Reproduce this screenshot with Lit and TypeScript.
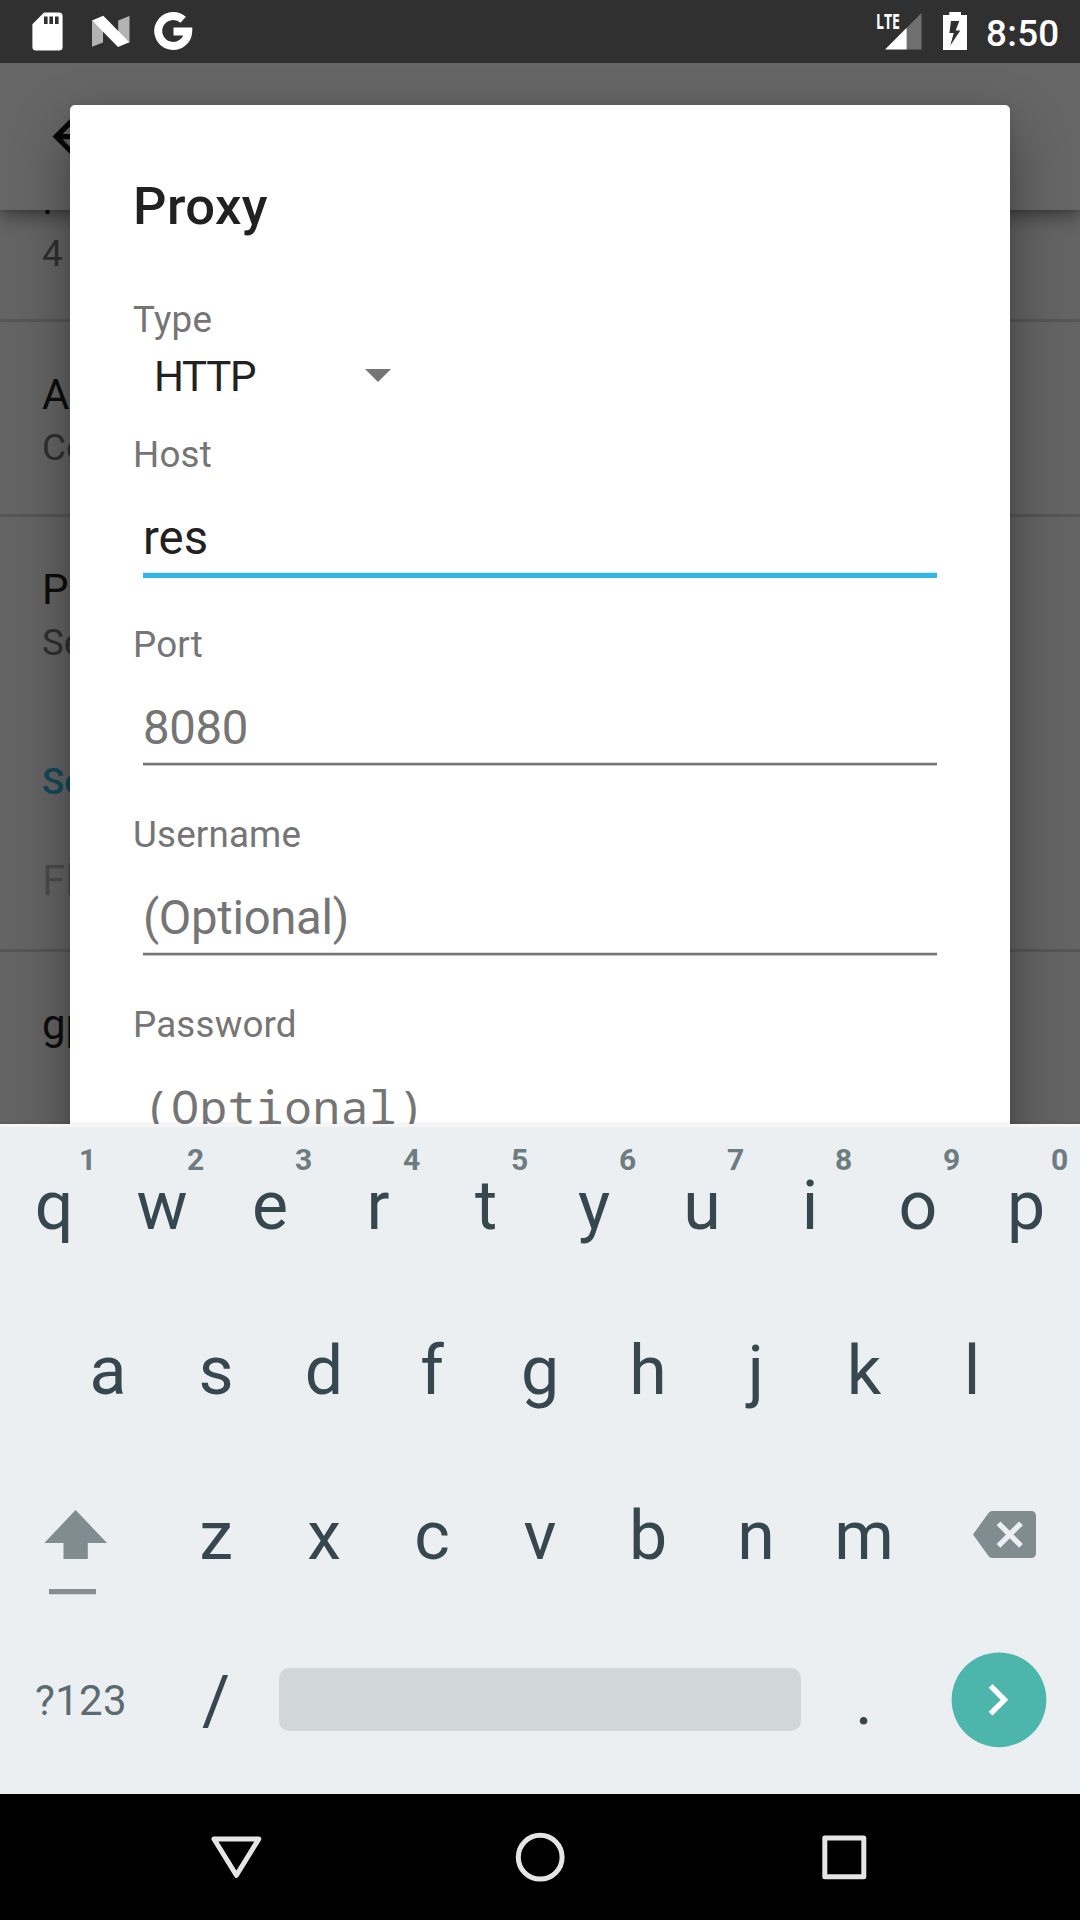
import { LitElement, html, css, svg, nothing } from "lit";
import { customElement, property } from "lit/decorators.js";

const FONT = css`Roboto, "Noto Sans", sans-serif`;

@customElement("status-bar")
class StatusBar extends LitElement {
  static styles = css`
    :host { display: flex; align-items: flex-start; justify-content: space-between; height: 63px; background: #303030; color: #fff; font-family: ${FONT}; }
    svg { display: block; height: 63px; }
    .right { display: flex; }
    .lte { font: 700 22px/24px "Open Sans", ${FONT}; }
    .time { box-sizing: border-box; width: 100px; padding-left: 6px; font-size: 36.75px; font-weight: 500; line-height: 68px; letter-spacing: .3px; }
  `;
  render() {
    return html`
      <svg width="200" viewBox="0 0 200 63">
        <path fill="#fff" fill-rule="evenodd" d="M44 12.5H59a3.6 3.6 0 0 1 3.6 3.6V47a3.6 3.6 0 0 1-3.6 3.6H36a3.6 3.6 0 0 1-3.6-3.6V24.2ZM44 16.500v7.500h3.600v-7.500Zm5.400 0v7.500h3.600v-7.500Zm5.600 0v7.500h3.600v-7.500Z"/>
        <path fill="#b3b3b3" d="M92 20.500 103 31v11.500L92 46.800ZM129.500 16 118.200 20.500V32L129.500 43Z"/>
        <path fill="#fff" d="M92 20.500 103.300 15.800 129.300 42.300 118 47Z"/>
        <path fill="none" stroke="#fff" stroke-width="8" d="M183.200 19.800A15 15 0 1 0 188.200 31.500H173.500"/>
      </svg>
      <div class="right">
        <svg width="106" viewBox="874 0 106 63">
          <text class="lte" x="876" y="29" fill="#fff" textLength="24" lengthAdjust="spacingAndGlyphs">LTE</text>
          <path fill="#6f6f6f" d="M921.500 13V49.500H906.500V28Z"/>
          <path fill="#fff" d="M906.700 27.800V49.500H885Z"/>
          <path fill="#fff" fill-rule="evenodd" d="M949.300 12H961v3h6v35H943V15h6.300ZM951 21l-1.600 12h4.300l-3.400 12.600L960.300 30.600h-4.600l3.600-9.600Z"/>
        </svg>
        <div class="time">8:50</div>
      </div>`;
  }
}

@customElement("settings-page")
class SettingsPage extends LitElement {
  static styles = css`
    :host { display: flex; flex-direction: column; height: 1731px; background: #fafafa; color: #212121; font-family: ${FONT}; }
    .bar { flex: none; height: 147px; box-sizing: border-box; padding: 42px; background: #fff; position: relative; z-index: 1; box-shadow: 0 6px 18px rgba(0,0,0,.42), 0 0 4px rgba(0,0,0,.2); }
    .bar svg { display: block; }
    .item { flex: none; box-sizing: border-box; padding-left: 42px; border-bottom: 3px solid #d8d8d8; }
    .main { font-size: 42px; line-height: 50px; }
    .sub { margin-top: 2px; font-size: 36.75px; line-height: 52px; color: #757575; }
    .first { height: 112px; padding-top: 17px; }
    .first .main { margin-top: -52px; }
    .first .sub { line-height: 54px; }
    .a { height: 195px; padding-top: 48px; }
    .p { height: 223px; padding-top: 48px; border: 0; }
    .head { font-size: 36.75px; font-weight: 500; line-height: 46px; color: #33b5e5; padding-left: 42px; margin-top: 19px; }
    .f { height: 147px; padding-top: 51px; color: #bdbdbd; }
    .g { padding-top: 48px; border: 0; }
  `;
  render() {
    return html`
      <div class="bar"><svg width="63" height="63" viewBox="0 0 24 24"><path fill="#111" d="M20 11H7.830l5.590-5.590L12 4l-8 8 8 8 1.410-1.410L7.830 13H20v-2z"/></svg></div>
      <div class="item first"><div class="main">P</div><div class="sub">4</div></div>
      <div class="item a"><div class="main">A</div><div class="sub">Co</div></div>
      <div class="item p"><div class="main">P</div><div class="sub">Se</div></div>
      <div class="head">Se</div>
      <div class="item f"><div class="main">Fl</div></div>
      <div class="item g"><div class="main">gp</div></div>`;
  }
}

@customElement("proxy-field")
class ProxyField extends LitElement {
  static styles = css`
    :host { display: flex; flex-direction: column; height: 190px; font-family: ${FONT}; color: #757575; }
    .label { font-size: 36.75px; line-height: 43px; letter-spacing: .18px; }
    .input { margin: 34px 10px 0; padding-bottom: 8px; height: 55px; font-size: 47.25px; line-height: 57px; letter-spacing: -.3px; white-space: nowrap; border-bottom: 2px solid #757575; box-shadow: inset 0 -1px #dcdcdc, 0 1px #c4c4c4; }
    .focus { color: #212121; letter-spacing: 0; border-bottom: 5px solid #33b5e5; box-shadow: inset 0 -1px #cfecf8; }
    .mono { font-family: "Noto Sans Mono", "DejaVu Sans Mono", monospace; font-size: 46px; line-height: 52px; letter-spacing: .65px; }
  `;
  @property() label = "";
  @property() value = "";
  @property() kind = "";
  render() {
    return html`<div class="label">${this.label}</div><div class="input ${this.kind}">${this.value}</div>`;
  }
}

@customElement("proxy-dialog")
class ProxyDialog extends LitElement {
  static styles = css`
    :host { display: flex; flex-direction: column; box-sizing: border-box; width: 940px; height: 1200px; padding: 71px 63px 0; background: #fff; border-radius: 5px; box-shadow: 0 24px 56px rgba(0,0,0,.38), 0 0 8px rgba(0,0,0,.06); font-family: ${FONT}; color: #212121; }
    .title { font-size: 52.5px; font-weight: 500; line-height: 60px; letter-spacing: .45px; }
    .label { margin-top: 62px; font-size: 36.75px; line-height: 43px; letter-spacing: .25px; color: #757575; }
    .spinner { display: flex; justify-content: space-between; align-items: center; width: 237px; margin: 11px 0 32px; padding-left: 21px; font-size: 42px; line-height: 49px; letter-spacing: -1.3px; }
    .spinner svg { margin-bottom: 2px; }
  `;
  render() {
    return html`
      <div class="title">Proxy</div>
      <div class="label">Type</div>
      <div class="spinner"><span>HTTP</span><svg width="26" height="13" viewBox="0 0 26 13"><path fill="#757575" d="M0 0H26L13 13Z"/></svg></div>
      <proxy-field label="Host" value="res" kind="focus"></proxy-field>
      <proxy-field label="Port" value="8080"></proxy-field>
      <proxy-field label="Username" value="(Optional)"></proxy-field>
      <proxy-field label="Password" value="(Optional)" kind="mono"></proxy-field>`;
  }
}

@customElement("soft-keyboard")
class SoftKeyboard extends LitElement {
  static styles = css`
    :host { display: flex; flex-direction: column; box-sizing: border-box; height: 670px; background: #eceff1; box-shadow: inset 0 3px #f5f6f7, 0 -1px 4px rgba(0,0,0,.08); font-family: ${FONT}; color: #37474f; }
    .row { display: flex; justify-content: center; height: 165px; }
    .key { position: relative; width: 108px; text-align: center; font-size: 68px; line-height: 165px; }
    .hint { position: absolute; left: 79px; top: 18px; font-size: 30px; font-weight: 700; line-height: 36px; color: #6e7c82; }
    .wide { width: 162px; }
    svg { display: block; }
    .sym { width: 162px; text-align: center; font-size: 42px; line-height: 163px; letter-spacing: .3px; color: #5c6b71; }
    .space { width: 522px; height: 63px; margin: 49px 9px 0; border-radius: 10px; background: #d1d6d9; }
  `;
  private keys(s: string, hints = "") {
    return [...s].map((c, i) => html`<div class="key">${c}${hints ? html`<span class="hint">${hints[i]}</span>` : nothing}</div>`);
  }
  render() {
    return html`
      <div class="row">${this.keys("qwertyuiop", "1234567890")}</div>
      <div class="row">${this.keys("asdfghjkl")}</div>
      <div class="row">
        <svg class="wide" height="165" viewBox="0 1454 162 165"><path fill="#808c90" d="M75.600 1510 107 1543H87.800V1559H63.500V1543H44.300Z"/><path fill="#838d94" d="M49 1589H96v5.200H49Z"/></svg>
        ${this.keys("zxcvbnm")}
        <svg class="wide" height="165" viewBox="918 1454 162 165"><path fill="#808c90" d="M992.500 1511H1031.500a4.500 4.500 0 0 1 4.500 4.500V1553.500a4.500 4.500 0 0 1-4.500 4.500H992.500a5 5 0 0 1-4.200-2.200L973 1534.500 988.300 1513.200A5 5 0 0 1 992.500 1511Z"/><path stroke="#eceff1" stroke-width="5.400" d="M998.500 1523.300 1021 1545.800M1021 1523.300 998.500 1545.800"/></svg>
      </div>
      <div class="row">
        <div class="sym">?123</div>
        <div class="key">/</div>
        <div class="space"></div>
        <div class="key">.</div>
        <svg class="wide" height="165" viewBox="918 1619 162 165"><circle cx="999" cy="1699.800" r="47.400" fill="#4db6ac"/><path fill="none" stroke="#fff" stroke-width="5.400" d="M990.600 1685.900 1004.500 1699.800 990.600 1713.700"/></svg>
      </div>`;
  }
}

@customElement("nav-bar")
class NavBar extends LitElement {
  static styles = css`
    :host { display: flex; justify-content: center; gap: 241px; align-items: center; height: 126px; background: #000; }
    svg { display: block; }
  `;
  private icon(shape: unknown) {
    return html`<svg width="63" height="63" viewBox="0 0 63 63" fill="none" stroke="#e5e5e5" stroke-width="5" stroke-linejoin="round">${shape}</svg>`;
  }
  render() {
    return html`
      ${this.icon(svg`<path d="M9 13H53.800L31.400 49.300Z"/>`)}
      ${this.icon(svg`<circle cx="31.200" cy="31.200" r="21.900"/>`)}
      ${this.icon(svg`<path d="M11.800 12H50.800V50.700H11.800Z"/>`)}`;
  }
}

@customElement("app-root")
class AppRoot extends LitElement {
  static styles = css`
    :host { display: flex; flex-direction: column; position: relative; width: 1080px; height: 1920px; overflow: hidden; background: #000; }
    .window { position: relative; height: 1061px; overflow: hidden; }
    .scrim { position: absolute; inset: 0; z-index: 2; background: rgba(0,0,0,.6); }
    proxy-dialog { position: absolute; left: 70px; top: 42px; z-index: 3; }
    soft-keyboard { position: relative; z-index: 4; }
  `;
  render() {
    return html`
      <status-bar></status-bar>
      <div class="window">
        <settings-page></settings-page>
        <div class="scrim"></div>
        <proxy-dialog></proxy-dialog>
      </div>
      <soft-keyboard></soft-keyboard>
      <nav-bar></nav-bar>`;
  }
}
